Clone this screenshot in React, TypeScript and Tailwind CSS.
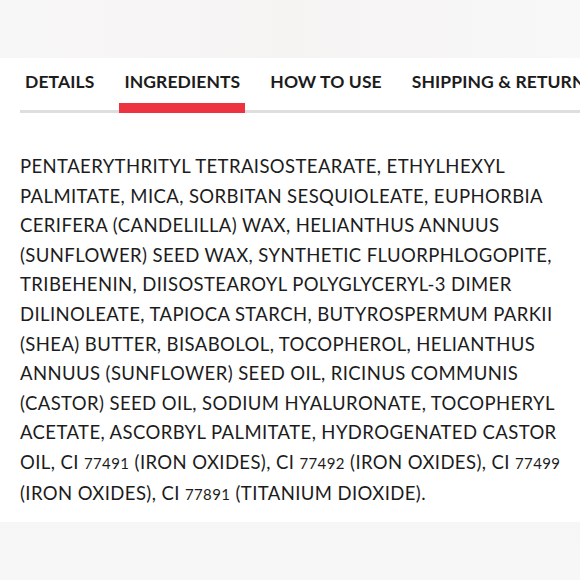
const tabs = ["DETAILS", "INGREDIENTS", "HOW TO USE", "SHIPPING & RETURNS"];

const Num = ({ children }: { children: string }) => (
  <span className="text-[15px]">{children}</span>
);

export default function App() {
  return (
    <div className="w-[580px] h-[580px] overflow-hidden flex flex-col bg-gradient-to-b from-[#efefef] to-[#f7f7f7] font-['Lato',sans-serif] text-[#1c1c1c]">
      {/* top strip */}
      <div className="h-[58px] shrink-0 bg-gradient-to-r from-[#f8f7f7] via-[#f6f3f3] to-[#f8f8f8]" />

      {/* panel */}
      <div className="h-[464px] shrink-0 bg-white pl-5">
        {/* tabs */}
        <div className="flex pt-[11px] border-b-[3px] border-[#dedede] whitespace-nowrap">
          {tabs.map((t, i) => (
            <div
              key={t}
              className={`relative px-[5px] pb-[16px] text-[17.5px] leading-[25px] font-bold tracking-[0.1px] ${i > 0 ? "ml-[20px]" : ""}`}
            >
              {t}
              {i === 1 && (
                <span className="absolute left-0 right-0 -bottom-[3px] h-[10px] bg-[#ee3340]" />
              )}
            </div>
          ))}
        </div>

        {/* ingredients */}
        <p className="mt-[39px] text-[18.5px] leading-[29.6px] tracking-[0.4px] whitespace-nowrap">
          PENTAERYTHRITYL TETRAISOSTEARATE, ETHYLHEXYL
          <br />
          PALMITATE, MICA, SORBITAN SESQUIOLEATE, EUPHORBIA
          <br />
          CERIFERA (CANDELILLA) WAX, HELIANTHUS ANNUUS
          <br />
          (SUNFLOWER) SEED WAX, SYNTHETIC FLUORPHLOGOPITE,
          <br />
          TRIBEHENIN, DIISOSTEAROYL POLYGLYCERYL-3 DIMER
          <br />
          DILINOLEATE, TAPIOCA STARCH, BUTYROSPERMUM PARKII
          <br />
          (SHEA) BUTTER, BISABOLOL, TOCOPHEROL, HELIANTHUS
          <br />
          ANNUUS (SUNFLOWER) SEED OIL, RICINUS COMMUNIS
          <br />
          (CASTOR) SEED OIL, SODIUM HYALURONATE, TOCOPHERYL
          <br />
          ACETATE, ASCORBYL PALMITATE, HYDROGENATED CASTOR
          <br />
          OIL, CI <Num>77491</Num> (IRON OXIDES), CI <Num>77492</Num> (IRON OXIDES), CI <Num>77499</Num>
          <br />
          (IRON OXIDES), CI <Num>77891</Num> (TITANIUM DIOXIDE).
        </p>
      </div>
    </div>
  );
}
